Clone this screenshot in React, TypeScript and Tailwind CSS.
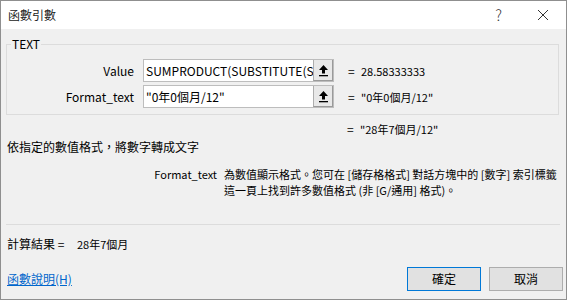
import React from "react";

const font = { fontFamily: '"Noto Sans CJK TC", "Noto Sans", sans-serif' };

function UpIcon() {
  return (
    <svg width="11" height="13" viewBox="0 0 11 13">
      <path d="M5.5 1 L1 6 L4 6 L4 9.5 L7 9.5 L7 6 L10 6 Z" fill="#000" />
      <rect x="1" y="11" width="9" height="1.3" fill="#000" />
    </svg>
  );
}

function ArgRow({ label, value }: { label: string; value: string }) {
  return (
    <div className="flex items-center h-[23px]">
      <div className="w-[127px] shrink-0 text-right">{label}</div>
      <div className="ml-[9px] w-[191px] shrink-0 h-[23px] flex border border-[#bdbdbd] bg-white">
        <div className="flex-1 overflow-hidden whitespace-nowrap pl-[2px] leading-[21px]">{value}</div>
        <div className="w-[20px] h-[21px] shrink-0 flex items-center justify-center bg-[#e8e8e8] border-l border-[#adadad] border-r border-b border-r-[#9a9a9a] border-b-[#9a9a9a]">
          <UpIcon />
        </div>
      </div>
    </div>
  );
}

function Result({ text }: { text: string }) {
  return (
    <div className="h-[23px] flex items-center">
      <span className="w-[13px] shrink-0">=</span>
      <span className="text-[11px]">{text}</span>
    </div>
  );
}

export default function App() {
  return (
    <div
      style={font}
      className="w-[567px] h-[300px] border border-[#8f8f8f] bg-[#f0f0f0] flex flex-col text-[12px] leading-[16px] text-black overflow-hidden"
    >
      <div className="h-[28px] bg-white flex items-center justify-between pl-[7px] pr-[17px] shrink-0">
        <span className="text-[12px] text-[#222]">函數引數</span>
        <div className="flex items-center gap-[35px]">
          <span className="text-[15px] font-light text-[#333]">?</span>
          <svg width="12" height="12" viewBox="0 0 12 12">
            <path d="M1 1 L11 11 M11 1 L1 11" stroke="#333" strokeWidth="1" />
          </svg>
        </div>
      </div>

      <div className="flex flex-col px-[5px]">
        <fieldset className="mt-[7px] border border-[#dcdcdc] pb-[6px] mr-[2px]">
          <legend className="ml-[4px] px-[1px] leading-[16px]">TEXT</legend>
          <div className="flex mt-[7px]">
            <div className="flex flex-col gap-[3px]">
              <ArgRow label="Value" value="SUMPRODUCT(SUBSTITUTE(SUBSTITUTE(" />
              <ArgRow label="Format_text" value={'"0年0個月/12"'} />
            </div>
            <div className="flex flex-col gap-[3px] ml-[14px]">
              <Result text="28.58333333" />
              <Result text={'"0年0個月/12"'} />
            </div>
          </div>
        </fieldset>

        <div className="mt-[6px] flex items-center h-[16px] pl-[341px]">
          <span className="w-[13px] shrink-0">=</span>
          <span className="text-[11px]">"28年7個月/12"</span>
        </div>

        <div className="mt-[2px] pl-[1px]">依指定的數值格式，將數字轉成文字</div>

        <div className="mt-[11px] flex">
          <div className="w-[211px] shrink-0 text-right text-[11px]">Format_text</div>
          <div className="ml-[7px] whitespace-nowrap text-[11px]">
            <div>為數值顯示格式。您可在 [儲存格格式] 對話方塊中的 [數字] 索引標籤</div>
            <div>這一頁上找到許多數值格式 (非 [G/通用] 格式)。</div>
          </div>
        </div>

        <div className="mt-[26px] h-px bg-[#dcdcdc] mr-[1px]" />

        <div className="mt-[11px] flex items-center pl-[1px]">
          <span className="w-[70px] shrink-0">計算結果 =</span>
          <span className="text-[11px]">28年7個月</span>
        </div>

        <div className="mt-[15px] flex items-center justify-between mr-[-2px]">
          <a className="text-[#0066cc] underline pl-[1px] cursor-pointer">函數說明(H)</a>
          <div className="flex gap-[8px]">
            <button className="w-[74px] h-[24px] bg-[#e1e1e1] border border-[#0078d7] text-[12px]">確定</button>
            <button className="w-[74px] h-[24px] bg-[#e1e1e1] border border-[#adadad] text-[12px]">取消</button>
          </div>
        </div>
      </div>
    </div>
  );
}
